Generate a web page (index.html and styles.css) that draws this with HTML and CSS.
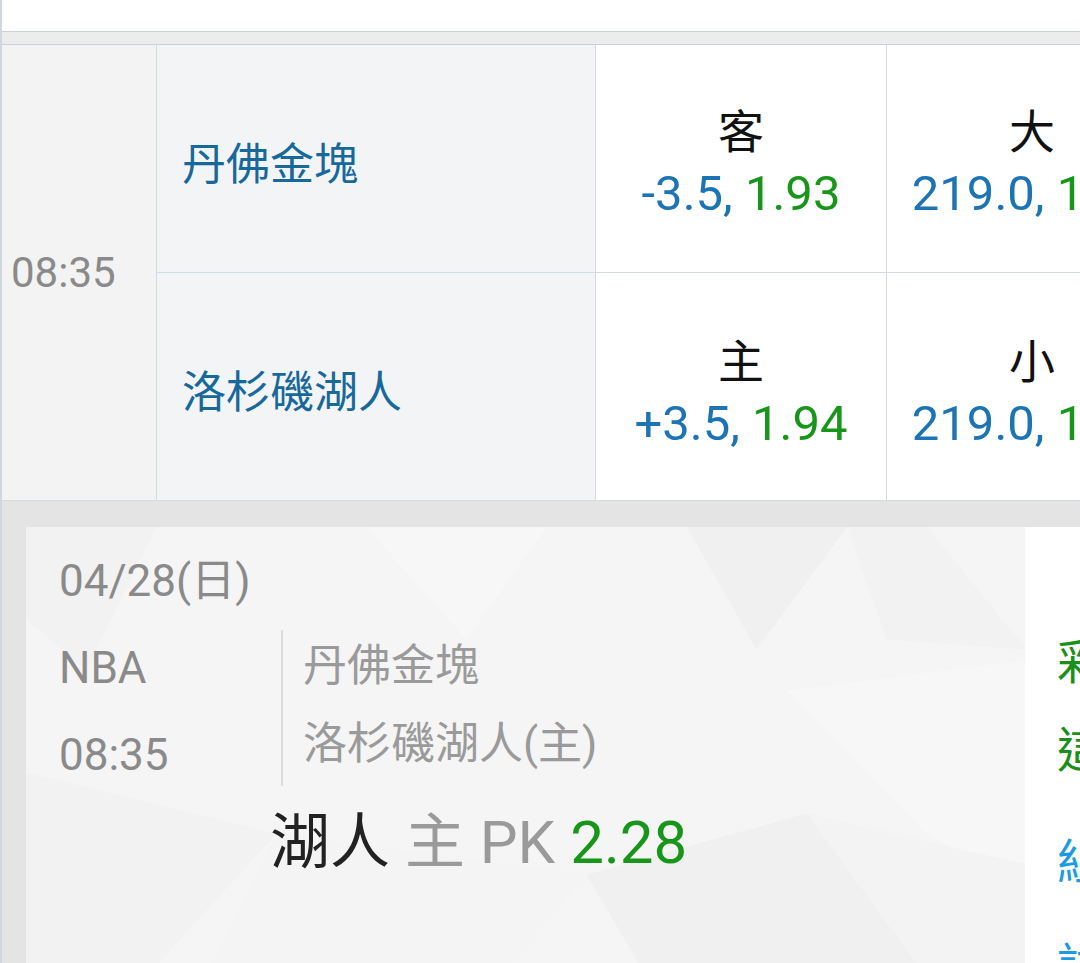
FILE: index.html
```html
<!DOCTYPE html>
<html lang="zh-Hant">
<head>
    <meta charset="UTF-8">
    <meta name="viewport" content="width=device-width, initial-scale=1.0">
    <title>NBA 賽事</title>
    <link rel="stylesheet" href="styles.css">
</head>
<body>
    <div class="page">
        <div class="topbar"></div>
        <div class="subbar"></div>

        <div class="match">
            <div class="cell time">08:35</div>

            <div class="cell team">丹佛金塊</div>
            <div class="cell odds first">
                <div class="odds-label">客</div>
                <div class="odds-value"><span class="handicap">-3.5,</span> <span class="price">1.93</span></div>
            </div>
            <div class="cell odds first">
                <div class="odds-label">大</div>
                <div class="odds-value"><span class="handicap">219.0,</span> <span class="price">1.90</span></div>
            </div>

            <div class="cell team">洛杉磯湖人</div>
            <div class="cell odds second">
                <div class="odds-label">主</div>
                <div class="odds-value"><span class="handicap">+3.5,</span> <span class="price">1.94</span></div>
            </div>
            <div class="cell odds second">
                <div class="odds-label">小</div>
                <div class="odds-value"><span class="handicap">219.0,</span> <span class="price">1.90</span></div>
            </div>
        </div>

        <div class="slip-area">
            <div class="slip-card">
                <svg class="slip-pattern" viewBox="0 0 998 440" preserveAspectRatio="none" aria-hidden="true">
                    <polygon points="0,0 130,0 60,140 0,90" fill="#f2f2f2"/>
                    <polygon points="340,0 520,0 440,110" fill="#f7f7f7"/>
                    <polygon points="660,0 820,0 730,120" fill="#f0f0f0"/>
                    <polygon points="820,0 900,0 1000,120 860,110" fill="#f2f2f2"/>
                    <polygon points="760,160 1000,130 1000,360 900,300" fill="#f7f7f7"/>
                    <polygon points="0,240 250,300 120,440 0,440" fill="#f2f2f2"/>
                    <polygon points="250,300 560,340 470,440 180,440" fill="#f4f4f4"/>
                    <polygon points="560,340 780,280 900,440 620,440" fill="#f0f0f0"/>
                    <polygon points="780,280 1000,330 1000,440 900,440" fill="#f3f3f3"/>
                </svg>

                <div class="slip-date">04/28(日)</div>

                <div class="slip-info">
                    <div class="slip-meta">
                        <div class="meta-line">NBA</div>
                        <div class="meta-line">08:35</div>
                    </div>
                    <div class="slip-teams">
                        <div class="team-line">丹佛金塊</div>
                        <div class="team-line">洛杉磯湖人(主)</div>
                    </div>
                </div>

                <div class="slip-pick">
                    <span class="pick-team">湖人</span>
                    <span class="pick-type">主 PK</span>
                    <span class="pick-price">2.28</span>
                </div>
            </div>

            <div class="side-panel">
                <div class="side-item green">彩</div>
                <div class="side-item green">這</div>
                <div class="side-item blue">組</div>
                <div class="side-item blue">詳</div>
            </div>
        </div>
    </div>
</body>
</html>
```

FILE: styles.css
```css
:root {
    --line-color: #d3dae0;
    --edge-color: #cfd8e0;
    --team-blue: #17689b;
    --odds-blue: #1c74b4;
    --odds-green: #17961a;
    --muted: #8a8a8a;
    --muted-light: #9a9a9a;
}

* {
    box-sizing: border-box;
    margin: 0;
    padding: 0;
}

html,
body {
    height: 100%;
    overflow: hidden;
}

body {
    font-family: Roboto, "Noto Sans CJK TC", "Noto Sans", sans-serif;
    background-color: #e4e4e4;
    color: #111;
}

.page {
    width: 1320px;
    min-height: 100%;
    border-left: 2px solid var(--edge-color);
    background-color: #e4e4e4;
}

.topbar {
    height: 32px;
    background: white;
    border-bottom: 1px solid #c9d2da;
}

.subbar {
    height: 13px;
    background: #ececec;
    border-bottom: 1px solid #c9d2da;
}

/* odds table */

.match {
    display: grid;
    grid-template-columns: 155px 439px 291px 291px;
    grid-template-rows: 228px 228px;
}

.cell {
    border-right: 1px solid var(--line-color);
    border-bottom: 1px solid var(--line-color);
}

.time {
    grid-row: span 2;
    display: flex;
    align-items: center;
    padding-left: 9px;
    background: #f3f3f3;
    color: var(--muted);
    font-size: 42px;
}

.team {
    display: flex;
    align-items: center;
    padding: 4px 0 0 25px;
    background: #f3f4f5;
    color: var(--team-blue);
    font-size: 44px;
}

.odds {
    display: flex;
    flex-direction: column;
    justify-content: center;
    align-items: center;
    background: white;
    white-space: nowrap;
}

.odds.first {
    padding-top: 8px;
}

.odds.second {
    padding-top: 12px;
}

.odds-label {
    font-size: 46px;
    line-height: 62px;
    color: #111;
}

.odds-value {
    font-size: 49px;
    line-height: 62px;
}

.handicap {
    color: var(--odds-blue);
}

.price {
    color: var(--odds-green);
}

/* bet slip */

.slip-area {
    display: flex;
    padding: 26px 0 0 24px;
}

.slip-card {
    position: relative;
    width: 999px;
    height: 450px;
    padding: 24px 0 0 33px;
    background: #f5f5f5;
    overflow: hidden;
}

.slip-pattern {
    position: absolute;
    top: 0;
    left: 0;
    width: 100%;
    height: 100%;
}

.slip-date,
.slip-info,
.slip-pick {
    position: relative;
}

.slip-date {
    font-size: 44px;
    line-height: 60px;
    color: var(--muted);
}

.slip-info {
    display: flex;
    margin-top: 19px;
}

.slip-meta {
    width: 222px;
    padding-top: 8px;
    display: flex;
    flex-direction: column;
    gap: 27px;
    font-size: 44px;
    line-height: 60px;
    color: var(--muted);
}

.slip-teams {
    height: 156px;
    padding: 6px 0 0 20px;
    border-left: 2px solid #dcdcdc;
    display: flex;
    flex-direction: column;
    gap: 18px;
    font-size: 44px;
    line-height: 60px;
    color: var(--muted-light);
}

.slip-pick {
    margin: 22px 0 0 211px;
    font-size: 60px;
    line-height: 70px;
    white-space: nowrap;
}

.pick-team {
    color: #222;
}

.pick-type {
    color: var(--muted-light);
}

.pick-price {
    color: var(--odds-green);
}

.side-panel {
    width: 260px;
    height: 450px;
    padding: 104px 0 0 32px;
    background: white;
    font-size: 48px;
    line-height: 64px;
}

.side-item {
    margin-bottom: 24px;
}

.side-item.green {
    color: #1a901a;
}

.side-item.blue {
    color: #1c9ae4;
    margin-bottom: 40px;
}

.side-item.green + .side-item.blue {
    margin-top: 48px;
}
```
